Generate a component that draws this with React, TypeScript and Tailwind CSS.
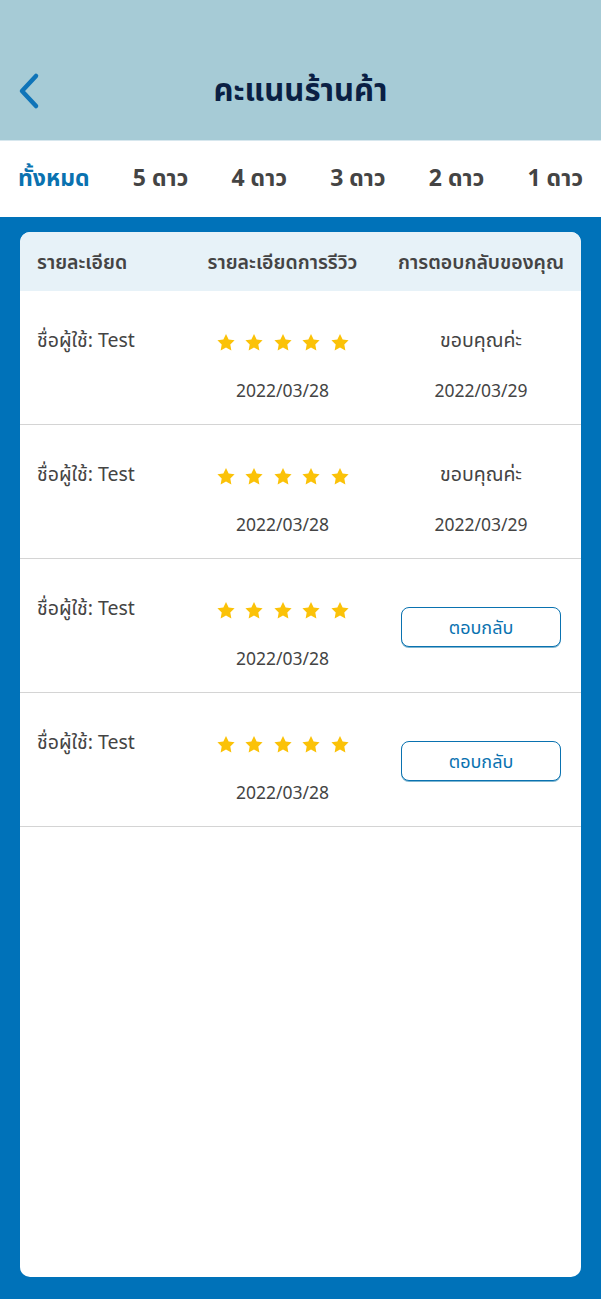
const tabs = ['ทั้งหมด', '5 ดาว', '4 ดาว', '3 ดาว', '2 ดาว', '1 ดาว']

const reviews = [
  { name: 'Test', date: '2022/03/28', reply: 'ขอบคุณค่ะ', replyDate: '2022/03/29' },
  { name: 'Test', date: '2022/03/28', reply: 'ขอบคุณค่ะ', replyDate: '2022/03/29' },
  { name: 'Test', date: '2022/03/28', reply: null, replyDate: null },
  { name: 'Test', date: '2022/03/28', reply: null, replyDate: null },
]

function Star() {
  return (
    <svg width="20" height="19" viewBox="0 0 24 23" className="shrink-0">
      <path
        d="M12 1.2l3.2 6.6 7.2 1-5.2 5.1 1.3 7.2L12 17.7l-6.5 3.4 1.3-7.2-5.2-5.1 7.2-1z"
        fill="#fbc208"
      />
    </svg>
  )
}

export default function App() {
  return (
    <div
      className="w-[601px] h-[1299px] flex flex-col bg-[#0072b9] overflow-hidden"
      style={{ fontFamily: '"Noto Sans", "Noto Sans Thai", Lato, sans-serif' }}
    >
      <div className="h-[141px] bg-[#a6cbd6] relative flex items-center justify-center pt-[38px] border-b border-[#d7e7ee]">
        <svg className="absolute left-[14px] top-[70px]" width="30" height="42" viewBox="0 0 30 42">
          <polyline
            points="22,6 8,21 22,36"
            fill="none"
            stroke="#0f74b8"
            strokeWidth="4.5"
            strokeLinecap="round"
            strokeLinejoin="round"
          />
        </svg>
        <h1 className="text-[31px] font-bold text-[#0a1f44]">คะแนนร้านค้า</h1>
      </div>

      <div className="h-[76px] bg-white flex items-center justify-between px-[18px] pb-[4px]">
        {tabs.map((t, i) => (
          <span
            key={t}
            className={
              i === 0
                ? 'text-[23px] font-bold text-[#0a72b0]'
                : 'text-[23px] font-bold text-[#444444]'
            }
          >
            {t}
          </span>
        ))}
      </div>

      <div className="flex-1 px-[20px] pt-[15px] pb-[22px]">
        <div className="h-full bg-white rounded-[10px] overflow-hidden">
          <div className="h-[59px] bg-[#e7f2f8] grid grid-cols-[165px_195px_202px] items-center text-[19.5px] font-semibold text-[#444444]">
            <span className="pl-[17px]">รายละเอียด</span>
            <span className="text-center whitespace-nowrap">รายละเอียดการรีวิว</span>
            <span className="text-center whitespace-nowrap">การตอบกลับของคุณ</span>
          </div>

          {reviews.map((r, i) => (
            <div
              key={i}
              className="h-[134px] border-b border-[#d4d4d4] grid grid-cols-[165px_195px_202px] text-[#444444]"
            >
              <div className="pl-[17px] pt-[34px] text-[19.5px]">ชื่อผู้ใช้: Test</div>
              <div className="flex flex-col items-center pt-[42px]">
                <div className="flex gap-[8.5px]">
                  <Star />
                  <Star />
                  <Star />
                  <Star />
                  <Star />
                </div>
                <span className="mt-[25px] text-[17.5px]">{r.date}</span>
              </div>
              {r.reply ? (
                <div className="flex flex-col items-center pt-[34px]">
                  <span className="text-[19.5px]">{r.reply}</span>
                  <span className="mt-[23px] text-[17.5px]">{r.replyDate}</span>
                </div>
              ) : (
                <div className="flex justify-center pt-[48px]">
                  <button className="w-[160px] h-[40px] border border-[#0a72b0] rounded-[8px] text-[#0a72b0] text-[18px] shadow-[0_1px_0_#7fb6d1] bg-white">
                    ตอบกลับ
                  </button>
                </div>
              )}
            </div>
          ))}
        </div>
      </div>
    </div>
  )
}
